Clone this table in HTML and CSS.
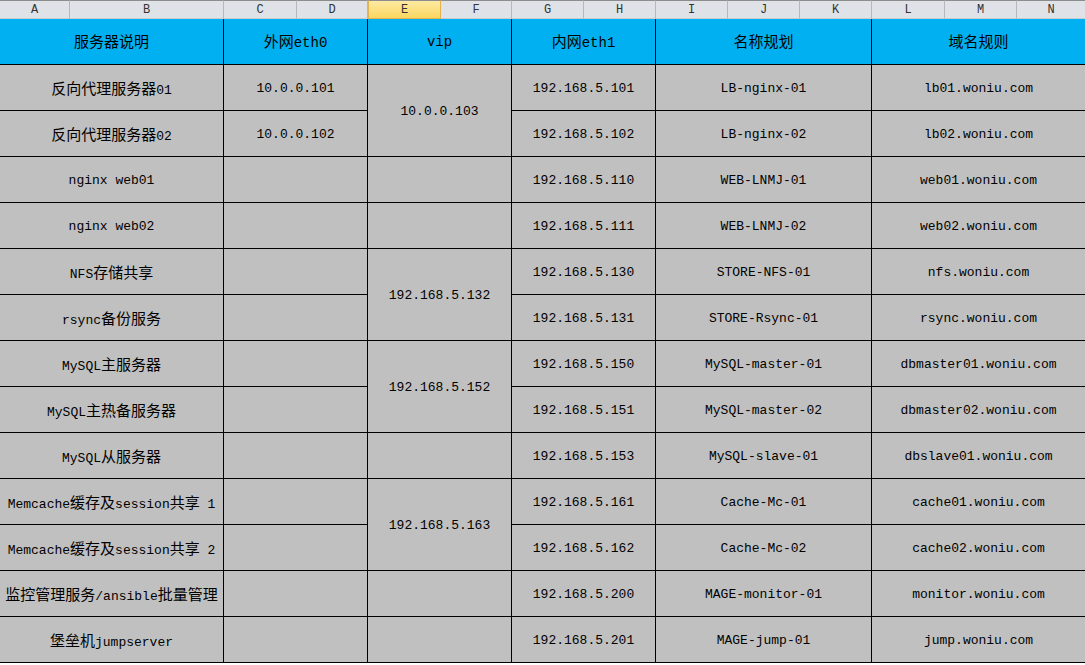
FILE: index.html
```html
<!DOCTYPE html>
<html lang="zh-CN">
<head>
<meta charset="utf-8">
<title>服务器规划</title>
<link rel="stylesheet" href="styles.css">
</head>
<body>
<table class="sheet">
  <colgroup>
    <col class="col-a"><col class="col-b"><col class="col-c"><col class="col-d">
    <col class="col-e"><col class="col-f"><col class="col-g"><col class="col-h">
    <col class="col-i"><col class="col-j"><col class="col-k"><col class="col-l">
    <col class="col-m"><col class="col-n">
  </colgroup>
  <thead>
    <tr class="letters">
      <th>A</th><th>B</th><th>C</th><th>D</th><th class="active">E</th><th>F</th><th>G</th>
      <th>H</th><th>I</th><th>J</th><th>K</th><th>L</th><th>M</th><th class="last">N</th>
    </tr>
  </thead>
  <tbody>
    <tr class="head">
      <td colspan="2"><span class="zh">服务器说明</span></td>
      <td colspan="2"><span class="zh">外网</span>eth0</td>
      <td colspan="2">vip</td>
      <td colspan="2"><span class="zh">内网</span>eth1</td>
      <td colspan="3"><span class="zh">名称规划</span></td>
      <td colspan="3" class="last"><span class="zh">域名规则</span></td>
    </tr>
    <tr>
      <td colspan="2"><span class="zh">反向代理服务器</span>01</td>
      <td colspan="2">10.0.0.101</td>
      <td colspan="2" rowspan="2">10.0.0.103</td>
      <td colspan="2">192.168.5.101</td>
      <td colspan="3">LB-nginx-01</td>
      <td colspan="3" class="last">lb01.woniu.com</td>
    </tr>
    <tr>
      <td colspan="2"><span class="zh">反向代理服务器</span>02</td>
      <td colspan="2">10.0.0.102</td>
      <td colspan="2">192.168.5.102</td>
      <td colspan="3">LB-nginx-02</td>
      <td colspan="3" class="last">lb02.woniu.com</td>
    </tr>
    <tr>
      <td colspan="2">nginx web01</td>
      <td colspan="2"></td>
      <td colspan="2"></td>
      <td colspan="2">192.168.5.110</td>
      <td colspan="3">WEB-LNMJ-01</td>
      <td colspan="3" class="last">web01.woniu.com</td>
    </tr>
    <tr>
      <td colspan="2">nginx web02</td>
      <td colspan="2"></td>
      <td colspan="2"></td>
      <td colspan="2">192.168.5.111</td>
      <td colspan="3">WEB-LNMJ-02</td>
      <td colspan="3" class="last">web02.woniu.com</td>
    </tr>
    <tr>
      <td colspan="2">NFS<span class="zh">存储共享</span></td>
      <td colspan="2"></td>
      <td colspan="2" rowspan="2">192.168.5.132</td>
      <td colspan="2">192.168.5.130</td>
      <td colspan="3">STORE-NFS-01</td>
      <td colspan="3" class="last">nfs.woniu.com</td>
    </tr>
    <tr>
      <td colspan="2">rsync<span class="zh">备份服务</span></td>
      <td colspan="2"></td>
      <td colspan="2">192.168.5.131</td>
      <td colspan="3">STORE-Rsync-01</td>
      <td colspan="3" class="last">rsync.woniu.com</td>
    </tr>
    <tr>
      <td colspan="2">MySQL<span class="zh">主服务器</span></td>
      <td colspan="2"></td>
      <td colspan="2" rowspan="2">192.168.5.152</td>
      <td colspan="2">192.168.5.150</td>
      <td colspan="3">MySQL-master-01</td>
      <td colspan="3" class="last">dbmaster01.woniu.com</td>
    </tr>
    <tr>
      <td colspan="2">MySQL<span class="zh">主热备服务器</span></td>
      <td colspan="2"></td>
      <td colspan="2">192.168.5.151</td>
      <td colspan="3">MySQL-master-02</td>
      <td colspan="3" class="last">dbmaster02.woniu.com</td>
    </tr>
    <tr>
      <td colspan="2">MySQL<span class="zh">从服务器</span></td>
      <td colspan="2"></td>
      <td colspan="2"></td>
      <td colspan="2">192.168.5.153</td>
      <td colspan="3">MySQL-slave-01</td>
      <td colspan="3" class="last">dbslave01.woniu.com</td>
    </tr>
    <tr>
      <td colspan="2">Memcache<span class="zh">缓存及</span>session<span class="zh">共享</span> 1</td>
      <td colspan="2"></td>
      <td colspan="2" rowspan="2">192.168.5.163</td>
      <td colspan="2">192.168.5.161</td>
      <td colspan="3">Cache-Mc-01</td>
      <td colspan="3" class="last">cache01.woniu.com</td>
    </tr>
    <tr>
      <td colspan="2">Memcache<span class="zh">缓存及</span>session<span class="zh">共享</span> 2</td>
      <td colspan="2"></td>
      <td colspan="2">192.168.5.162</td>
      <td colspan="3">Cache-Mc-02</td>
      <td colspan="3" class="last">cache02.woniu.com</td>
    </tr>
    <tr>
      <td colspan="2"><span class="zh">监控管理服务</span>/ansible<span class="zh">批量管理</span></td>
      <td colspan="2"></td>
      <td colspan="2"></td>
      <td colspan="2">192.168.5.200</td>
      <td colspan="3">MAGE-monitor-01</td>
      <td colspan="3" class="last">monitor.woniu.com</td>
    </tr>
    <tr>
      <td colspan="2"><span class="zh">堡垒机</span>jumpserver</td>
      <td colspan="2"></td>
      <td colspan="2"></td>
      <td colspan="2">192.168.5.201</td>
      <td colspan="3">MAGE-jump-01</td>
      <td colspan="3" class="last">jump.woniu.com</td>
    </tr>
  </tbody>
</table>
</body>
</html>
```

FILE: styles.css
```css
html, body {
  margin: 0;
  padding: 0;
  background: #ffffff;
}

.sheet {
  width: 1085px;
  table-layout: fixed;
  border-collapse: separate;
  border-spacing: 0;
  font-family: "Liberation Mono", "Noto Sans CJK SC", monospace;
  font-size: 13px;
  color: #000;
}

.col-a { width: 70px; }
.col-b { width: 154px; }
.col-c { width: 73px; }
.col-d { width: 71px; }
.col-e { width: 73px; }
.col-f { width: 71px; }
.col-g { width: 72px; }
.col-h { width: 72px; }
.col-i { width: 72px; }
.col-j { width: 72px; }
.col-k { width: 72px; }
.col-l { width: 73px; }
.col-m { width: 72px; }
.col-n { width: 68px; }

.letters th {
  height: 19px;
  box-sizing: border-box;
  padding: 0;
  background: #dfe3e8;
  border-top: 1px solid #8c8c8c;
  border-right: 1px solid #b4b8bd;
  border-bottom: 1px solid #c6cbd1;
  font-family: "Liberation Mono", monospace;
  font-weight: normal;
  font-size: 12px;
  line-height: 16px;
  color: #333;
  text-align: center;
  vertical-align: middle;
}

.letters th.active {
  background: linear-gradient(#fdeaa3, #fbd660);
  border-right-color: #e2b34e;
  border-bottom-color: #e2b34e;
  border-left: 1px solid #e2b34e;
}

.letters th.last {
  border-right: none;
}

tbody td {
  height: 46px;
  box-sizing: border-box;
  padding: 2px 0 0;
  background: #c0c0c0;
  border-right: 1px solid #000;
  border-bottom: 1px solid #000;
  text-align: center;
  vertical-align: middle;
  white-space: nowrap;
  overflow: hidden;
}

tbody td.last {
  border-right: none;
}

.head td {
  background: #00b0f0;
  font-size: 14px;
  padding-top: 0;
}

.zh {
  font-family: "Noto Sans CJK SC", sans-serif;
  font-size: 15px;
  line-height: 1;
}
```
